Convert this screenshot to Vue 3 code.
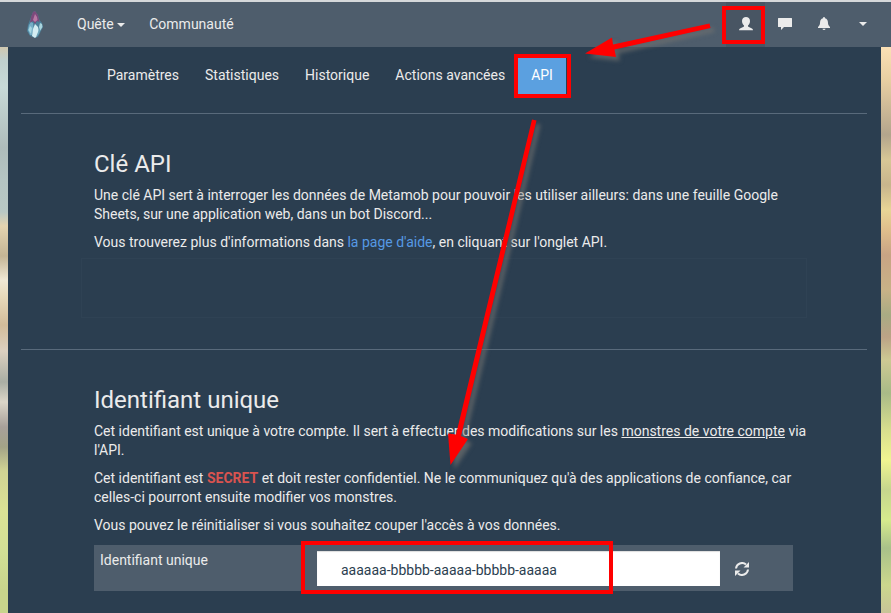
<script setup>
import { ref } from 'vue'

const tabs = ['Paramètres', 'Statistiques', 'Historique', 'Actions avancées', 'API']
const activeTab = ref('API')
const uniqueId = ref('aaaaaa-bbbbb-aaaaa-bbbbb-aaaaa')
</script>

<template>
  <div class="app">
    <header class="navbar">
      <a class="brand" href="#" aria-label="Metamob">
        <svg width="16" height="28" viewBox="0 0 16 28" aria-hidden="true">
          <path d="M8 0 11 4 12.500 9 15 12 16 16 13 22 11 26 8 27 3 25 0 20 1 14 4 6 6 1Z" fill="#4c7f98" />
          <path d="M8 0 11 4 12.500 11 10 10 8 13 6 10 3 12 4 6 6 1Z" fill="#7c4a7b" />
          <path d="M8 3 10 6 10.500 9 8 11 6 9Z" fill="#b878a4" />
          <path d="M4 11 6 12 6.500 17 5 24 3 24 1 19 2 14Z" fill="#75aec6" />
          <path d="M3 15 5 17 4 23 1.500 19Z" fill="#a7d6e1" />
          <path d="M8 13 11 16 12 20 10 25 8 27 5 25 6 18Z" fill="#d4edf2" />
          <path d="M13 12 15 13 15.500 16 13 20 12 16Z" fill="#a9d4dd" />
          <path d="M12 17 13 20 12 23 9 26 11 21Z" fill="#6da5ba" />
        </svg>
      </a>
      <nav class="links">
        <a href="#">Quête <span class="caret"></span></a>
        <a href="#">Communauté</a>
      </nav>
      <div class="tools">
        <a class="tool current" href="#" aria-label="Mon compte">
          <svg width="14" height="14" viewBox="0 0 14 14" aria-hidden="true">
            <path d="M7 0C9.200 0 11 1.300 11 4C11 6 10 7.700 9 8.500V9.500Q10 10.200 12.500 11.200Q14 11.700 14 13.200H0Q0 11.700 1.500 11.200Q4 10.200 5 9.500V8.500C4 7.700 3 6 3 4C3 1.300 4.800 0 7 0Z" />
          </svg>
        </a>
        <a class="tool" href="#" aria-label="Messages">
          <svg width="14" height="14" viewBox="0 0 14 14" aria-hidden="true">
            <path d="M.500 1H13.500Q14 1 14 1.500V9.500Q14 10 13.500 10H6L3 13V10H.500Q0 10 0 9.500V1.500Q0 1 .500 1Z" />
          </svg>
        </a>
        <a class="tool" href="#" aria-label="Notifications">
          <svg width="14" height="14" viewBox="0 0 14 14" aria-hidden="true">
            <path d="M7 0Q8 0 8 1.200C10 1.700 10.800 3.200 10.900 5C11 7.800 11.500 8.500 13 10V11H1V10C2.500 8.500 3 7.800 3.100 5C3.200 3.200 4 1.700 6 1.200Q6 0 7 0ZM5.500 11.700H8.500Q8.500 13 7 13Q5.500 13 5.500 11.700Z" />
          </svg>
        </a>
        <a class="tool" href="#" aria-label="Plus d'options"><span class="caret"></span></a>
      </div>
    </header>

    <main class="page">
      <nav class="tabs">
        <button
          v-for="tab in tabs"
          :key="tab"
          type="button"
          :class="{ active: tab === activeTab }"
          @click="activeTab = tab"
        >{{ tab }}</button>
      </nav>

      <section class="block">
        <h3>Clé API</h3>
        <p>Une clé API sert à interroger les données de Metamob pour pouvoir les utiliser ailleurs: dans une feuille Google Sheets, sur une application web, dans un bot Discord...</p>
        <p>Vous trouverez plus d'informations dans <a class="help" href="#">la page d'aide</a>, en cliquant sur l'onglet API.</p>
        <div class="well"></div>
      </section>

      <section class="block">
        <h3>Identifiant unique</h3>
        <p>Cet identifiant est unique à votre compte. Il sert à effectuer des modifications sur les <a class="monsters" href="#">monstres de votre compte</a> via l'API.</p>
        <p>Cet identifiant est <strong>SECRET</strong> et doit rester confidentiel. Ne le communiquez qu'à des applications de confiance, car celles-ci pourront ensuite modifier vos monstres.</p>
        <p>Vous pouvez le réinitialiser si vous souhaitez couper l'accès à vos données.</p>
        <div class="field">
          <label for="unique-id">Identifiant unique</label>
          <input id="unique-id" v-model="uniqueId" type="text" readonly />
          <button type="button" aria-label="Réinitialiser">
            <svg width="14" height="14" viewBox="0 0 14 14" aria-hidden="true">
              <path d="M1 6.500A6 6 0 0 1 11 2.600M13 7.500A6 6 0 0 1 3 11.400" fill="none" stroke="#ebebeb" stroke-width="2" />
              <path d="M14 0V5.500H8.500ZM0 14V8.500H5.500Z" />
            </svg>
          </button>
        </div>
      </section>
    </main>

    <svg class="marks" width="891" height="613" viewBox="0 0 891 613" aria-hidden="true">
      <g class="arrows">
        <path d="M709.500 23.500 613 44.500 612 37.500 585 53.500 616 57 614.500 49.500 710.500 28Z" />
        <path d="M532 119.500 456 434.500 448 433.500 450.500 465 468 439 461 436 536.500 120.500Z" />
      </g>
      <g fill="none" stroke="#f00" stroke-width="4">
        <rect x="724" y="8" width="39" height="34" />
        <rect x="516" y="56" width="53" height="40" />
        <rect x="303" y="543" width="308" height="49" />
      </g>
    </svg>
  </div>
</template>

<style>
body {
  margin: 0;
}
</style>

<style scoped>
* {
  box-sizing: border-box;
}

.app {
  position: relative;
  display: flex;
  flex-direction: column;
  min-height: 100vh;
  overflow: hidden;
  font: 14px/19px Roboto, sans-serif;
  color: #ebebeb;
  background:
    linear-gradient(#d0c8b0 47px, #c0d0ce 60px, #c8dad8 87px, #aebcbb 148px, #b5c5c3 180px, #b8c8c4 212px, #e4d4b0 226px, #c4b595 256px, #f0e8d4 280px, #e8dabb 296px, #d2bc9a 325px, #dcd0c0 351px, #a9aea4 382px, #dad5c8 402px, #a8a09a 427px, #a3a387 447px, #d0d494 471px, #dbe295 511px, #d2df95 552px, #c8d58c 590px) left / 50% 100% no-repeat,
    linear-gradient(#fbe0b5 47px, #e8cfa2 80px, #b3a58c 135px, #d8c796 160px, #c8b58c 185px, #e8d596 210px, #dfbe8c 230px, #c8a484 255px, #c8b287 290px, #a9ab83 315px, #bca386 337px, #cdc993 360px, #a9ba87 393px, #d8df8e 430px, #f0f591 460px, #c6d68d 490px, #d6ea8d 520px, #a9c189 548px, #ccd78d 585px, #c8c498 613px) right / 50% 100% no-repeat;
}

a {
  color: inherit;
  text-decoration: none;
}

svg {
  display: block;
  fill: #ebebeb;
}

.navbar {
  display: flex;
  height: 47px;
  padding: 0 9px 0 27px;
  background: #4e5d6c;
  border-top: 2px solid #d5d8da;
}

.brand {
  padding-top: 9px;
}

.links {
  display: flex;
  align-items: center;
  gap: 24px;
  margin-left: 34px;
}

.caret {
  display: inline-block;
  vertical-align: middle;
  border-top: 4px solid;
  border-right: 4px solid transparent;
  border-left: 4px solid transparent;
}

.tools {
  display: flex;
  margin-left: auto;
}

.tool {
  display: flex;
  align-items: center;
  justify-content: center;
  width: 39px;
  padding-bottom: 2px;
}

.tool.current {
  background: #485563;
}

.page {
  flex: 1;
  margin: 0 10px 0 8px;
  padding: 0 14px 22px 13px;
  background: #2b3e50;
}

.tabs {
  display: flex;
  padding: 11px 73px 19px;
}

.tabs button {
  height: 36px;
  padding: 0 13px 2px;
  font: inherit;
  color: inherit;
  white-space: nowrap;
  background: none;
  border: 0;
}

.tabs .active {
  color: #fff;
  background: #5ba0e0;
}

.block {
  padding: 37px 54px 0 73px;
  border-top: 1px solid #596a7b;
}

h3 {
  margin: 0 0 9px;
  font-size: 24px;
  font-weight: 400;
  line-height: 26px;
}

p {
  margin: 0 0 9px;
}

.help {
  color: #5699e4;
}

.monsters {
  text-decoration: underline;
}

strong {
  color: #d9534f;
}

.well {
  height: 60px;
  margin: -3px 6px 31px -13px;
  border: 1px solid #2f4254;
}

.field {
  display: grid;
  grid-template-columns: 217fr 403fr 67fr;
  align-items: start;
  height: 46px;
  margin: 10px 20px 0 0;
  padding: 6px;
  background: #4e5d6c;
}

.field input {
  min-width: 0;
  height: 35px;
  padding: 3px 24px 0;
  font: inherit;
  color: #2b3e50;
  background: #fff;
  border: 0;
  border-radius: 0;
  box-shadow: inset 0 1px 1px #ddd;
}

.field button {
  height: 35px;
  padding: 0 15px;
  background: none;
  border: 0;
}

.marks {
  position: absolute;
  top: 0;
  left: 0;
  pointer-events: none;
}

.arrows path {
  fill: #f00;
}

.arrows {
  filter: drop-shadow(4px 4px 2px rgba(115, 115, 112, 0.65));
}
</style>
